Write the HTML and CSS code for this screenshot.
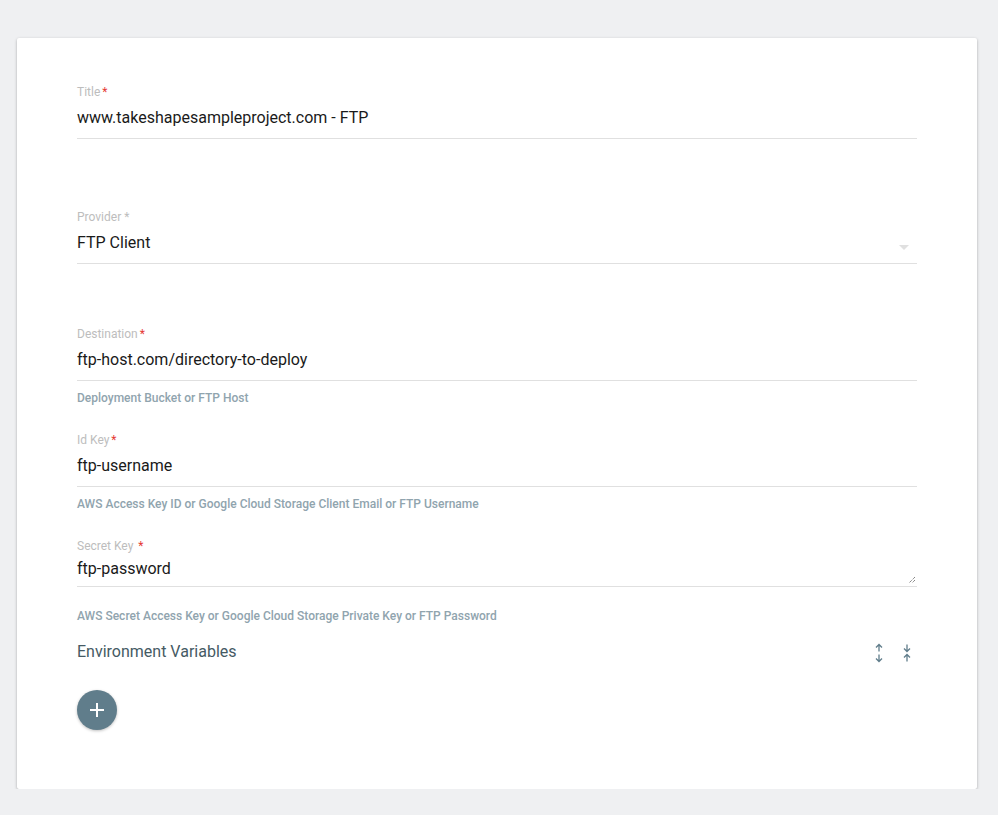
FILE: index.html
```html
<!DOCTYPE html>
<html lang="en">
<head>
    <meta charset="UTF-8">
    <meta name="viewport" content="width=device-width, initial-scale=1.0">
    <title>Deployment - FTP</title>
    <link rel="stylesheet" href="styles.css">
</head>
<body>
    <div class="card">
        <div class="field field-title">
            <label class="field-label">Title<span class="req">*</span></label>
            <div class="field-input">
                <span class="value">www.takeshapesampleproject.com - FTP</span>
            </div>
        </div>

        <div class="field field-provider">
            <label class="field-label">Provider *</label>
            <div class="field-input select">
                <span class="value">FTP Client</span>
                <span class="caret"></span>
            </div>
        </div>

        <div class="field field-dest">
            <label class="field-label">Destination<span class="req">*</span></label>
            <div class="field-input">
                <span class="value">ftp-host.com/directory-to-deploy</span>
            </div>
            <p class="helper">Deployment Bucket or FTP Host</p>
        </div>

        <div class="field">
            <label class="field-label">Id Key<span class="req">*</span></label>
            <div class="field-input">
                <span class="value">ftp-username</span>
            </div>
            <p class="helper">AWS Access Key ID or Google Cloud Storage Client Email or FTP Username</p>
        </div>

        <div class="field field-secret">
            <label class="field-label">Secret Key <span class="req">*</span></label>
            <div class="field-input textarea">
                <span class="value">ftp-password</span>
                <svg class="grip" width="8" height="8" viewBox="0 0 8 8">
                    <path d="M7 1 L1 7 M7 4 L4 7" stroke="#555" stroke-width="1" stroke-dasharray="1 1"/>
                </svg>
            </div>
            <p class="helper">AWS Secret Access Key or Google Cloud Storage Private Key or FTP Password</p>
        </div>

        <div class="env-head">
            <span class="env-title">Environment Variables</span>
            <div class="env-tools">
                <!-- expand all -->
                <svg width="10" height="20" viewBox="0 0 10 20">
                    <path d="M5 1.5 V8.5 M2 4.5 L5 1.5 L8 4.5 M5 11.5 V18.5 M2 15.5 L5 18.5 L8 15.5" fill="none" stroke="#607d8b" stroke-width="1.3"/>
                </svg>
                <!-- collapse all -->
                <svg width="10" height="20" viewBox="0 0 10 20">
                    <path d="M5 1.5 V8.5 M2 5.5 L5 8.5 L8 5.5 M5 11.5 V18.5 M2 14.5 L5 11.5 L8 14.5" fill="none" stroke="#607d8b" stroke-width="1.3"/>
                </svg>
            </div>
        </div>

        <button class="fab" type="button">
            <svg width="14" height="14" viewBox="0 0 14 14">
                <path d="M7 0 V14 M0 7 H14" stroke="#fff" stroke-width="2"/>
            </svg>
        </button>
    </div>
</body>
</html>
```

FILE: styles.css
```css
body {
    margin: 0;
    padding: 38px 21px 0 17px;
    background-color: #eff0f2;
    font-family: Roboto, "Liberation Sans", Arial, sans-serif;
    color: #212121;
}

.card {
    background-color: #fff;
    padding: 45px 60px 59px 60px;
    box-shadow: 0 1px 3px rgba(0, 0, 0, 0.3);
    border-radius: 2px;
}

.field-label {
    display: block;
    padding-top: 1px;
    font-size: 12px;
    line-height: 16px;
    color: #bdbdbd;
}

.req {
    color: #e53935;
    margin-left: 2px;
}

.field-input {
    position: relative;
    padding: 6px 0 8px;
    border-bottom: 1px solid #e0e0e0;
    font-size: 16px;
    line-height: 24px;
    color: #1a1a1a;
}

.field-provider {
    margin-top: 69px;
}

.field-dest {
    margin-top: 61px;
}

.caret {
    position: absolute;
    right: 8px;
    top: 20px;
    width: 0;
    height: 0;
    border-left: 5px solid transparent;
    border-right: 5px solid transparent;
    border-top: 5px solid #e0e0e0;
}

.helper {
    margin: 9px 0 25px;
    font-size: 12px;
    line-height: 16px;
    font-weight: 500;
    color: #90a4ae;
}

.field-input.textarea {
    padding: 3px 0 5px;
}

.grip {
    position: absolute;
    right: 1px;
    bottom: 2px;
}

.field-secret .helper {
    margin-top: 21px;
    margin-bottom: 0;
}

.env-head {
    display: flex;
    align-items: center;
    justify-content: space-between;
    margin-top: 16px;
}

.env-title {
    font-size: 16px;
    line-height: 20px;
    color: #455a64;
}

.env-tools {
    display: flex;
    gap: 18px;
    margin-right: 5px;
    margin-top: 3px;
}

.env-tools svg {
    display: block;
}

.fab {
    display: flex;
    align-items: center;
    justify-content: center;
    width: 40px;
    height: 40px;
    margin-top: 27px;
    border: none;
    border-radius: 50%;
    background-color: #607d8b;
    box-shadow: 0 1px 3px rgba(0, 0, 0, 0.25);
    cursor: pointer;
    padding: 0;
}
```
